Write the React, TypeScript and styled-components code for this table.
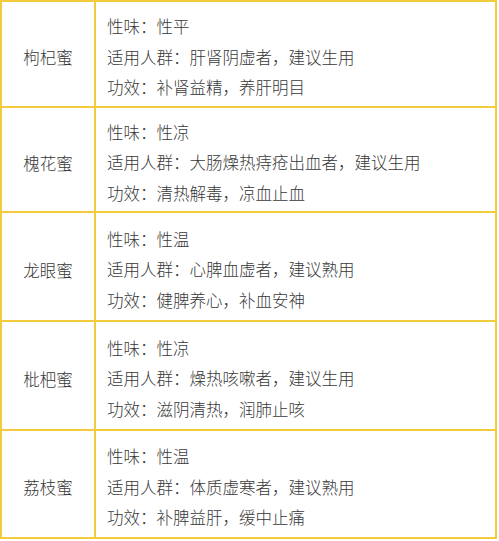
import React from "react";
import styled, { createGlobalStyle } from "styled-components";

const GlobalStyle = createGlobalStyle`
  html, body { margin: 0; padding: 0; background: #ffffff; }
  body { font-family: "Noto Sans CJK SC", "Noto Sans", sans-serif; }
`;

const Table = styled.div`
  width: 497px;
  box-sizing: border-box;
  border: 2px solid #f2cc3c;
  background: #fff;
`;

const Row = styled.div<{ $h: number; $last?: boolean }>`
  display: grid;
  grid-template-columns: 94px 1fr;
  height: ${(p) => p.$h}px;
  box-sizing: border-box;
  border-bottom: ${(p) => (p.$last ? "none" : "2px solid #f2cc3c")};
`;

const NameCell = styled.div`
  display: flex;
  align-items: center;
  justify-content: center;
  padding-top: 6px;
  border-right: 2px solid #f2cc3c;
  font-size: 16.5px;
  font-weight: 300;
  color: #383838;
`;

const InfoCell = styled.div`
  display: flex;
  flex-direction: column;
  justify-content: center;
  padding: 6px 0 0 11px;
  font-size: 16.5px;
  font-weight: 300;
  line-height: 30.5px;
  color: #383838;
  white-space: nowrap;
`;

const Line = styled.div``;

const data = [
  { name: "枸杞蜜", h: 106, lines: ["性味：性平", "适用人群：肝肾阴虚者，建议生用", "功效：补肾益精，养肝明目"] },
  { name: "槐花蜜", h: 105, lines: ["性味：性凉", "适用人群：大肠燥热痔疮出血者，建议生用", "功效：清热解毒，凉血止血"] },
  { name: "龙眼蜜", h: 109, lines: ["性味：性温", "适用人群：心脾血虚者，建议熟用", "功效：健脾养心，补血安神"] },
  { name: "枇杷蜜", h: 109, lines: ["性味：性凉", "适用人群：燥热咳嗽者，建议生用", "功效：滋阴清热，润肺止咳"] },
  { name: "荔枝蜜", h: 106, lines: ["性味：性温", "适用人群：体质虚寒者，建议熟用", "功效：补脾益肝，缓中止痛"] },
];

export default function App() {
  return (
    <>
      <GlobalStyle />
      <Table>
        {data.map((r, i) => (
          <Row key={r.name} $h={r.h} $last={i === data.length - 1}>
            <NameCell>{r.name}</NameCell>
            <InfoCell>
              {r.lines.map((l) => (
                <Line key={l}>{l}</Line>
              ))}
            </InfoCell>
          </Row>
        ))}
      </Table>
    </>
  );
}
